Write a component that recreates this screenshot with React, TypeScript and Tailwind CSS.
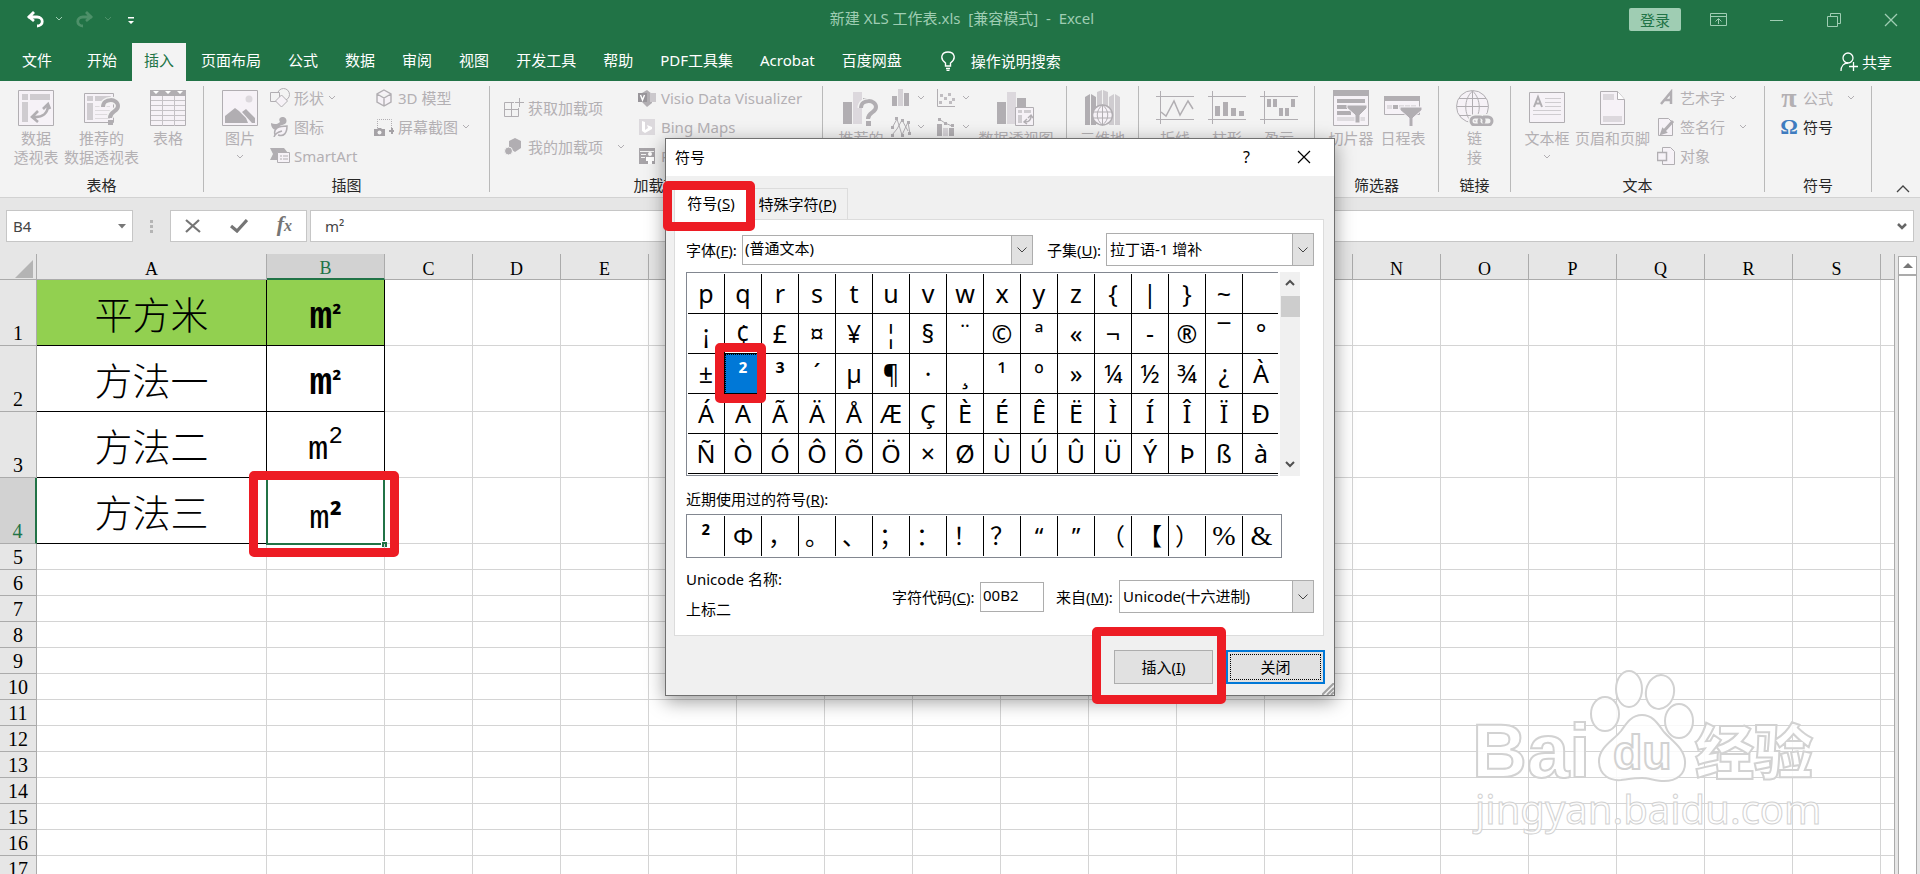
import type { ReactNode } from 'react'
import clsx from 'clsx'

const TABS = ['开始', '插入', '页面布局', '公式', '数据', '审阅', '视图', '开发工具', '帮助', 'PDF工具集', 'Acrobat', '百度网盘']

const COLUMNS = ['C', 'D', 'E', 'F', 'G', 'H', 'I', 'J', 'K', 'L', 'M', 'N', 'O', 'P', 'Q', 'R', 'S']

const SYMBOLS = [
  ...'pqrstuvwxyz{|}~\u00a0',
  ...'¡¢£¤¥¦§¨©ª«¬-®¯°',
  ...'±²³´µ¶·¸¹º»¼½¾¿À',
  ...'ÁÂÃÄÅÆÇÈÉÊËÌÍÎÏÐ',
  ...'ÑÒÓÔÕÖ×ØÙÚÛÜÝÞßà',
]

const RECENT = [...'²Φ，。、；：！？“”（【）%&']

// Shared svg shell: grey "disabled" strokes on a pale fill
function Icon({ w, h = w, children }: { w: number; h?: number; children: ReactNode }) {
  return (
    <svg width={w} height={h} viewBox={`0 0 ${w} ${h}`} fill="none" stroke="#b1aeb2" aria-hidden="true" className="shrink-0">
      {children}
    </svg>
  )
}

function Chevron({ className = 'text-[#b1aeb2]' }: { className?: string }) {
  return (
    <svg width="8" height="6" viewBox="0 0 8 6" fill="none" stroke="currentColor" className={clsx('shrink-0', className)} aria-hidden="true">
      <path d="M1 1l3 3 3-3" />
    </svg>
  )
}

const PivotIcon = () => (
  <Icon w={36}>
    <path d="M.5.5h35v35H.5z" fill="#f6f2f7" />
    <path d="M4 4h6v6H4zM12 4h20v6H12zM4 12h6v20H4z" fill="#cfccd0" stroke="none" />
    <path d="M15 27c10 1 15-4 15-12M20 21l-6 6 6 5M25 19l5-5 2 5" strokeWidth="2.6" />
  </Icon>
)

const QuestionMark = ({ x, y }: { x: number; y: number }) => (
  <g transform={`translate(${x} ${y})`}>
    <path d="M2 8c0-9 15-9 15-1 0 6-8 5-8 12" stroke="#f3f3f3" strokeWidth="7" />
    <path d="M2 8c0-9 15-9 15-1 0 6-8 5-8 12" strokeWidth="4" />
    <path d="M7 21h5v5H7z" fill="#b1aeb2" stroke="none" />
  </g>
)

const RecommendPivotIcon = () => (
  <Icon w={36}>
    <path d="M.5 3.500h29v29H.5z" fill="#f6f2f7" />
    <path d="M3 6h6v5H3zM11 6h16v5H11zM3 13h6v17H3z" fill="#cfccd0" stroke="none" />
    <path d="M11 16.500h15M11 20.500h15M11 24.500h15M11 28.500h15" stroke="#dddadd" />
    <QuestionMark x={17} y={9} />
  </Icon>
)

const TableIcon = () => (
  <Icon w={36}>
    <path d="M.5.5h35v35H.5z" fill="#f6f2f7" />
    <path d="M0 0h36v6H0z" fill="#b1aeb2" stroke="none" />
    <path d="M3 1h6L6 4zM15 1h6l-3 3zM27 1h6l-3 3z" fill="#fff" stroke="none" />
    <path d="M12.500 6v30M24.500 6v30M1 10.500h34M1 15.500h34M1 20.500h34M1 25.500h34M1 30.500h34" stroke="#c5c2c6" />
  </Icon>
)

const PictureIcon = () => (
  <Icon w={36}>
    <path d="M.5.5h35v35H.5z" fill="#f6f2f7" />
    <circle cx="27" cy="9" r="3.500" fill="#dcd8dd" stroke="none" />
    <path d="M3 33v-7l10-8 4 3 7 7 2 5zM20 22l4-3 9 9v5h-3z" fill="#b1aeb2" stroke="none" />
  </Icon>
)

const ShapesIcon = () => (
  <Icon w={20}>
    <circle cx="13.500" cy="6.500" r="6" />
    <path d="M.5 4.500h9v9h-9z" fill="#f3f3f3" />
    <path d="M11.500 7l6 6-6 6-6-6z" fill="#f6f2f7" />
  </Icon>
)

const DuckIcon = () => (
  <Icon w={20}>
    <path d="M10 1c4-3 8 1 6 5-3 3-7 1-8 6-4 2-7-1-7-6 4 2 7 1 9-1-1-2-1-3 0-4z" fill="#b1aeb2" stroke="none" />
    <path d="M5 18c-2-7 4-9 12-9 0 7-3 11-9 9M4 20c1-3 4-5 8-6" fill="#f6f2f7" strokeWidth="1.500" />
  </Icon>
)

const SmartArtIcon = () => (
  <Icon w={20}>
    <path d="M0 2h14l4 5H7v7H0l3-6z" fill="#b1aeb2" stroke="none" />
    <path d="M7.500 6.500h12v10h-12z" fill="#f6f2f7" />
    <path d="M10 10h2M13 10h5M10 13h2M13 13h5" />
  </Icon>
)

const CubeIcon = () => (
  <Icon w={18}>
    <path d="M9 1l7 4v8l-7 4-7-4V5zM2 5l7 4 7-4M9 9v8" fill="#f6f2f7" strokeWidth="1.400" />
  </Icon>
)

const ScreenshotIcon = () => (
  <Icon w={20}>
    <path d="M3.500 11V2.500h14V12" strokeDasharray="1 1" />
    <path d="M0 12h3l1-1h3l1 1h3v7H0zM15 13h2v-2h2v2h1v2h-1v2h-2v-2h-2z" fill="#a5a2a6" stroke="none" />
    <circle cx="5.500" cy="15.500" r="2" fill="#f3f3f3" stroke="none" />
  </Icon>
)

const StoreIcon = () => (
  <Icon w={20}>
    <path d="M.5 4.500H10M.5 4.500v14h14V10M7.500 4.500v14M.5 11.500h14M15.500 0v9M11 4.500h9" />
  </Icon>
)

const AddinsIcon = () => (
  <Icon w={20}>
    <path d="M11 1l6 3v7l-6 4-6-4V4z" fill="#b1aeb2" stroke="none" />
    <circle cx="4.500" cy="14" r="4" fill="#b1aeb2" stroke="#f3f3f3" />
  </Icon>
)

const VisioIcon = () => (
  <Icon w={18}>
    <path d="M9 1l5 4v9l-5 4-5-5V4z" fill="#b1aeb2" stroke="none" />
    <path d="M12 4h6v9h-6z" fill="#cbc8cc" stroke="none" />
    <path d="M0 4h9v9H0z" fill="#98959a" stroke="none" />
    <path d="M2.500 6l2 5 2-5" stroke="#fff" strokeWidth="1.400" />
  </Icon>
)

const BingIcon = () => (
  <Icon w={18}>
    <path d="M1 1h16v16H1z" fill="#dcd9dd" stroke="none" />
    <path d="M4 3l3 1v8l3-2-1-3 5 2v2l-7 4-3-2z" fill="#fff" stroke="none" />
  </Icon>
)

const PeopleIcon = () => (
  <Icon w={18}>
    <path d="M1 1h16v16H1z" fill="#a7a4a8" stroke="none" />
    <path d="M2 4.500h14M3 7.500h5M3 10.500h4" stroke="#f3f3f3" />
    <path d="M12 5a2 2 0 110 4 2 2 0 010-4zM8 10h8v4h-2v3h-4v-3H8z" fill="#fff" stroke="none" />
  </Icon>
)

const RecommendChartIcon = () => (
  <Icon w={36}>
    <path d="M0 12h9v22H0zM20 8h9v4h-9z" fill="#b1aeb2" stroke="none" />
    <path d="M10 2h9v32h-9z" fill="#dcd8dd" stroke="none" />
    <QuestionMark x={16} y={10} />
  </Icon>
)

const BarChartIcon = () => (
  <Icon w={18}>
    <path d="M0 7h5v10H0zM12 4h5v13h-5z" fill="#b1aeb2" stroke="none" />
    <path d="M6 0h5v17H6z" fill="#d5d2d6" stroke="none" />
  </Icon>
)

const ScatterIcon = () => (
  <Icon w={18}>
    <path d="M.5 0v17.500H18" />
    <path d="M3 5h3v3H3zM11 4h3v3h-3zM7 8h3v3H7zM2 12h3v3H2zM12 12h3v3h-3zM15 9h3v3h-3z" fill="#c0bdc1" stroke="none" />
  </Icon>
)

const WaveIcon = () => (
  <Icon w={20}>
    <path d="M1 11l5-9 5 16 6-13 2 12M1 18l5-6 5-9 6 11" />
    <path d="M0 9h3v3H0zM4 0h3v3H4zM10 17h3v3h-3zM16 4h3v3h-3zM0 17h3v3H0zM17 15h3v3h-3zM10 2h3v3h-3z" fill="#b1aeb2" stroke="none" />
  </Icon>
)

const ComboIcon = () => (
  <Icon w={18}>
    <path d="M0 6h5v12H0zM12 10h5v8h-5z" fill="#b1aeb2" stroke="none" />
    <path d="M6 10h5v8H6z" fill="#d5d2d6" stroke="none" />
    <path d="M2 1l6 4 7 3" />
    <path d="M1 0h3v3H1zM7 4h3v3H7zM14 6h3v3h-3z" fill="#b1aeb2" stroke="none" />
  </Icon>
)

const PivotChartIcon = () => (
  <Icon w={38} h={36}>
    <path d="M0 12h9v22H0zM20 8h9v9h-9z" fill="#b1aeb2" stroke="none" />
    <path d="M10 2h9v32h-9z" fill="#dcd8dd" stroke="none" />
    <path d="M18.500 17.500h18v18h-18z" fill="#f6f2f7" />
    <path d="M21 20h4v3h-4zM27 20h7v3h-7zM21 25h4v8h-4z" fill="#cfccd0" stroke="none" />
    <path d="M28 32c4 0 6-2 6-6M30 29l-3 3 3 2M31 28l3-3 2 3" strokeWidth="1.400" />
  </Icon>
)

const MapIcon = () => (
  <Icon w={36}>
    <path d="M0 7l5-3v31H0zM6 4l5 3v28H6z" fill="#b1aeb2" stroke="none" />
    <path d="M12 2l5-2v34h-5zM18 0l5 2v32h-5zM24 7l5-3v31h-5zM30 4l5 3v28h-5z" fill="#cfccd0" stroke="none" />
    <circle cx="17.500" cy="25" r="10" fill="#f6f2f7" strokeWidth="1.500" />
    <path d="M8 22h19M8 28h19M17.500 15v20M17.500 15c-7 5-7 15 0 20M17.500 15c7 5 7 15 0 20" />
  </Icon>
)

const SparkFrame = ({ children }: { children: ReactNode }) => (
  <Icon w={38} h={36}>
    <path d="M0 6.500h38M0 29.500h38M4.500 1v33" />
    {children}
  </Icon>
)

const SlicerIcon = () => (
  <Icon w={36}>
    <path d="M.5.5h35v35H.5z" fill="#f6f2f7" />
    <path d="M0 0h36v6H0zM4 9h28v4H4zM4 15h12v4H4zM4 21h14v4H4z" fill="#b1aeb2" stroke="none" />
    <path d="M4 27h28v4H4z" fill="#dedbdf" stroke="none" />
    <path d="M14 15h20v3l-7 7v8h-5v-8l-8-7z" fill="#b1aeb2" stroke="#f6f2f7" />
  </Icon>
)

const TimelineIcon = () => (
  <Icon w={38} h={36}>
    <path d="M.5 6.500h35v18H.5z" fill="#f6f2f7" />
    <path d="M0 6h36v5H0zM9 15h5v4H9z" fill="#b1aeb2" stroke="none" />
    <path d="M3 15h5v4H3zM15 15h5v4h-5zM21 15h5v4h-5zM27 15h5v4h-5z" fill="#dedbdf" stroke="none" />
    <path d="M16 17h22v3l-9 8v10h-4V28l-9-8z" fill="#b1aeb2" stroke="#f6f2f7" />
  </Icon>
)

const LinkIcon = () => (
  <Icon w={38} h={36}>
    <circle cx="16.500" cy="16.500" r="16" fill="#f6f2f7" />
    <path d="M3 8.500h27M1 16.500h31M3 25.500h27M16.500 1v32M16.500 1c-9 8-9 24 0 32M16.500 1c9 8 9 24 0 32" />
    <path d="M24 35h-5a4 4 0 010-8h5c4 0 5 4 3 6M27 27h5a4 4 0 010 8h-5c-4 0-5-4-3-6" stroke="#f3f3f3" strokeWidth="6" />
    <path d="M24 35h-5a4 4 0 010-8h5c4 0 5 4 3 6M27 27h5a4 4 0 010 8h-5c-4 0-5-4-3-6" strokeWidth="3" />
  </Icon>
)

const TextBoxIcon = () => (
  <Icon w={36}>
    <path d="M.5 2.500h35v30H.5z" fill="#f6f2f7" />
    <path d="M5 17l4-10 4 10M6.500 13.500h5" strokeWidth="2" />
    <path d="M16 8.500h16M16 12.500h16M16 16.500h16M4 20.500h28M4 24.500h28" stroke="#cfccd0" />
  </Icon>
)

const HeaderFooterIcon = () => (
  <Icon w={26} h={36}>
    <path d="M.5 1.500h17l7 8v25H.5z" fill="#f6f2f7" />
    <path d="M17.500 1.500v8h7" fill="#fff" />
    <path d="M3 4h11v6H3zM3 26h19v6H3z" fill="#dcd8dd" stroke="none" />
  </Icon>
)

const WordArtIcon = () => (
  <Icon w={18}>
    <path d="M4 15L14 3v12M7 11h7" strokeWidth="2.500" />
  </Icon>
)

const SignatureIcon = () => (
  <Icon w={18}>
    <path d="M1.500.5h10l4 4v13h-14z" fill="#f6f2f7" />
    <path d="M7 13l9-10M5 15l3-1-2-2z" strokeWidth="3" />
  </Icon>
)

const ObjectIcon = () => (
  <Icon w={18}>
    <path d="M5.500.5h8l4 4v13h-12z" fill="#f6f2f7" />
    <path d="M.5 5.500h9v8h-9z" fill="#f6f2f7" strokeWidth="1.500" />
  </Icon>
)

interface GroupProps {
  label: string
  className: string
  children: ReactNode
}

function Group({ label, className, children }: GroupProps) {
  return (
    <section className={clsx('flex h-[106px] shrink-0 flex-col border-r border-[#b9b9b9]', className)}>
      <div className="flex flex-1 items-start">{children}</div>
      <div className="text-center leading-[14px] text-[#262626]">{label}</div>
    </section>
  )
}

interface BigButtonProps {
  icon: ReactNode
  lines: string[]
  className: string
  menu?: boolean
}

function BigButton({ icon, lines, className, menu }: BigButtonProps) {
  return (
    <button disabled className={clsx('flex shrink-0 flex-col items-center pt-1 leading-[19px] whitespace-nowrap', className)}>
      {icon}
      <span className="mt-[3px]">{lines[0]}</span>
      {lines[1] && <span>{lines[1]}</span>}
      {menu && <span className="pt-1.5"><Chevron /></span>}
    </button>
  )
}

interface SmallButtonProps {
  icon: ReactNode
  text?: string
  menu?: boolean
  active?: boolean
  className?: string
}

function SmallButton({ icon, text, menu, active, className = 'gap-1' }: SmallButtonProps) {
  return (
    <button disabled={!active} className={clsx('flex h-[29px] items-center whitespace-nowrap', active && 'text-[#262626]', className)}>
      <span className="flex w-5 justify-center">{icon}</span>
      {text && <span>{text}</span>}
      {menu && <Chevron />}
    </button>
  )
}

function TitleBar() {
  return (
    <header className="flex h-[43px] items-start bg-[#217346] text-[#9fcdb3]">
      <div className="flex flex-1 items-center gap-2.5 pt-[10px] pl-[26px]">
        <button aria-label="撤消">
          <svg width="19" height="18" viewBox="0 0 19 18" fill="none" stroke="#fff" strokeWidth="2.800">
            <path d="M8 2L3 7l5 4M2 7h9c7 0 7 9 0 9" />
          </svg>
        </button>
        <Chevron className="text-[#9fcdb3]" />
        <button aria-label="恢复" disabled className="ml-0.5">
          <svg width="19" height="18" viewBox="0 0 19 18" fill="none" stroke="#4d9069" strokeWidth="2.800">
            <path d="M11 2l5 5-5 4M17 7H8c-7 0-7 9 0 9" />
          </svg>
        </button>
        <Chevron className="text-[#4d9069]" />
        <button aria-label="自定义快速访问工具栏" className="ml-1.5">
          <svg width="6" height="8" viewBox="0 0 6 8" fill="#fff" className="mt-1">
            <path d="M0 0h6v1.500H0zM0 4h6L3 7z" />
          </svg>
        </button>
      </div>
      <h1 className="pt-[7px] leading-[22px] whitespace-pre">新建 XLS 工作表.xls  [兼容模式]  -  Excel</h1>
      <div className="flex flex-1 items-center justify-end pt-2 pr-[22px]">
        <button className="mr-[29px] h-[23px] w-[52px] rounded-xs bg-[#9fcdb3] leading-[22px] text-[#217346]">登录</button>
        <button aria-label="功能区显示选项" className="mr-[42px]">
          <svg width="18" height="14" viewBox="0 0 18 14" fill="none" stroke="currentColor">
            <path d="M.5.5h16v12H.5zM.5 3.500h16M8.500 11V6M5.500 8.500l3-3 3 3" />
          </svg>
        </button>
        <button aria-label="最小化" className="mr-[43px]">
          <svg width="14" height="14" viewBox="0 0 14 14" stroke="currentColor"><path d="M0 7.500h13" /></svg>
        </button>
        <button aria-label="向下还原" className="mr-[43px]">
          <svg width="14" height="14" viewBox="0 0 14 14" fill="none" stroke="currentColor">
            <path d="M.5 3.500h10v10H.5zM3.500 3V.5h10v10H11" />
          </svg>
        </button>
        <button aria-label="关闭窗口">
          <svg width="14" height="14" viewBox="0 0 14 14" stroke="currentColor" strokeWidth="1.300"><path d="M1 1l12 12M13 1L1 13" /></svg>
        </button>
      </div>
    </header>
  )
}

function TabBar() {
  return (
    <nav className="flex h-[38px] items-stretch gap-[3px] bg-[#217346] pl-2.5 whitespace-nowrap text-white">
      <button className="mr-2 px-3 pb-1">文件</button>
      {TABS.map((tab) => (
        <button key={tab} className={clsx('px-3 pb-1', tab === '插入' && 'bg-[#f3f3f3] text-[#217346]')}>
          {tab}
        </button>
      ))}
      <button className="ml-6 flex items-center gap-4 pb-0.5">
        <svg width="14" height="20" viewBox="0 0 14 20" fill="none" stroke="currentColor" strokeWidth="1.400">
          <path d="M4.500 15v-3C-2 7 1 1 7 1s9 6 2.500 11v3zM5 17.500h4M5.500 19.500h3" />
        </svg>
        操作说明搜索
      </button>
      <button className="mr-7 ml-auto flex items-center gap-1">
        <svg width="18" height="20" viewBox="0 0 18 20" fill="none" stroke="currentColor" strokeWidth="1.300">
          <circle cx="8" cy="6" r="5" />
          <path d="M1 19c0-5 3-8 7-8M9 14.500h9M13.500 10v9" />
        </svg>
        共享
      </button>
    </nav>
  )
}

function Ribbon() {
  return (
    <div className="flex h-[117px] border-b border-[#d2d2d2] bg-[#f3f3f3] pt-[5px] text-[#b3b0b3]">
      <Group label="表格" className="w-[204px]">
        <BigButton className="ml-2 w-14" icon={<PivotIcon />} lines={['数据', '透视表']} />
        <BigButton className="w-[75px]" icon={<RecommendPivotIcon />} lines={['推荐的', '数据透视表']} />
        <BigButton className="w-[58px]" icon={<TableIcon />} lines={['表格']} />
      </Group>
      <Group label="插图" className="w-[286px]">
        <BigButton className="ml-2 w-14" icon={<PictureIcon />} lines={['图片']} menu />
        <div className="-mt-[3px] ml-0.5 w-[104px]">
          <SmallButton icon={<ShapesIcon />} text="形状" menu className="gap-1" />
          <SmallButton icon={<DuckIcon />} text="图标" />
          <SmallButton icon={<SmartArtIcon />} text="SmartArt" />
        </div>
        <div className="-mt-[3px]">
          <SmallButton icon={<CubeIcon />} text="3D 模型" />
          <SmallButton icon={<ScreenshotIcon />} text="屏幕截图" menu />
        </div>
      </Group>
      <Group label="加载项" className="w-[333px]">
        <div className="mt-[7px] ml-[14px] flex w-[133px] flex-col gap-2.5">
          <SmallButton icon={<StoreIcon />} text="获取加载项" />
          <SmallButton icon={<AddinsIcon />} text="我的加载项" menu className="gap-1 [&>svg]:ml-2.5" />
        </div>
        <div className="-mt-[3px]">
          <SmallButton icon={<VisioIcon />} text="Visio Data Visualizer" />
          <SmallButton icon={<BingIcon />} text="Bing Maps" />
          <SmallButton icon={<PeopleIcon />} text="People Graph" />
        </div>
      </Group>
      <Group label="图表" className="w-[244px]">
        <BigButton className="ml-2 w-[60px]" icon={<RecommendChartIcon />} lines={['推荐的', '图表']} />
        <div className="-mt-[3px] w-[45px]">
          <SmallButton icon={<BarChartIcon />} menu className="gap-1.5" />
          <SmallButton icon={<WaveIcon />} menu className="gap-1.5" />
        </div>
        <div className="-mt-[3px] w-10">
          <SmallButton icon={<ScatterIcon />} menu className="gap-1.5" />
          <SmallButton icon={<ComboIcon />} menu className="gap-1.5" />
        </div>
        <BigButton className="w-[80px]" icon={<PivotChartIcon />} lines={['数据透视图']} />
      </Group>
      <Group label="演示" className="w-[72px]">
        <BigButton className="w-full" icon={<MapIcon />} lines={['三维地', '图']} />
      </Group>
      <Group label="迷你图" className="w-44">
        <BigButton
          className="ml-2.5 w-[52px]"
          icon={<SparkFrame><path d="M5 22l5 4 8-15 6 14 8-14 5 8" strokeWidth="1.500" /></SparkFrame>}
          lines={['折线']}
        />
        <BigButton
          className="w-[52px]"
          icon={<SparkFrame><path d="M7 16h5v10H7zM15 12h5v14h-5zM23 18h5v8h-5zM31 21h5v5h-5z" fill="#b1aeb2" stroke="none" /></SparkFrame>}
          lines={['柱形']}
        />
        <BigButton
          className="w-[52px]"
          icon={<SparkFrame><path d="M7 9h4v8H7zM13 9h4v8h-4zM19 18h4v8h-4zM25 18h4v8h-4zM31 9h4v8h-4z" fill="#b1aeb2" stroke="none" /></SparkFrame>}
          lines={['盈亏']}
        />
      </Group>
      <Group label="筛选器" className="w-[124px]">
        <BigButton className="ml-2 w-14" icon={<SlicerIcon />} lines={['切片器']} />
        <BigButton className="w-12" icon={<TimelineIcon />} lines={['日程表']} />
      </Group>
      <Group label="链接" className="w-[72px]">
        <BigButton className="w-full" icon={<LinkIcon />} lines={['链', '接']} />
      </Group>
      <Group label="文本" className="w-[254px]">
        <BigButton className="ml-2 w-14" icon={<TextBoxIcon />} lines={['文本框']} menu />
        <BigButton className="w-[75px]" icon={<HeaderFooterIcon />} lines={['页眉和页脚']} />
        <div className="-mt-[3px] ml-1.5">
          <SmallButton icon={<WordArtIcon />} text="艺术字" menu className="gap-1" />
          <SmallButton icon={<SignatureIcon />} text="签名行" menu className="gap-1 [&>svg]:ml-2.5" />
          <SmallButton icon={<ObjectIcon />} text="对象" className="gap-1" />
        </div>
      </Group>
      <Group label="符号" className="w-[107px]">
        <div className="-mt-[3px] ml-3.5">
          <SmallButton icon={<span className="font-['Liberation_Serif',serif] text-[28px] leading-5 font-bold">π</span>} text="公式" menu className="gap-1 [&>svg]:ml-2.5" />
          <SmallButton active icon={<span className="font-['Liberation_Serif',serif] text-[22px] leading-5 font-bold text-[#3f7cbf]">Ω</span>} text="符号" />
        </div>
      </Group>
      <button aria-label="折叠功能区" className="mr-2.5 ml-auto self-end pb-1 text-[#444]">
        <svg width="14" height="8" viewBox="0 0 14 8" fill="none" stroke="currentColor" strokeWidth="1.300"><path d="M1 7l6-6 6 6" /></svg>
      </button>
    </div>
  )
}

function FormulaBar() {
  return (
    <div className="flex h-14 items-start bg-[#e6e6e6] px-1.5 pt-3 text-[#444]">
      <div className="flex h-8 w-[127px] items-center border border-[#c6c6c6] bg-white pr-1.5">
        <input aria-label="名称框" defaultValue="B4" className="h-full min-w-0 flex-1 pl-1.5 outline-none" />
        <svg width="8" height="5" viewBox="0 0 8 5" fill="#777"><path d="M0 0h8L4 4.500z" /></svg>
      </div>
      <div className="flex h-8 w-[37px] flex-col items-center justify-center gap-0.5">
        <i className="size-[3px] bg-[#b5b5b5]" />
        <i className="size-[3px] bg-[#b5b5b5]" />
        <i className="size-[3px] bg-[#b5b5b5]" />
      </div>
      <div className="flex h-8 w-[137px] items-center justify-between border border-[#c6c6c6] bg-white px-3.5 text-[#757575]">
        <button aria-label="取消">
          <svg width="16" height="14" viewBox="0 0 16 14" fill="none" stroke="currentColor" strokeWidth="2.200"><path d="M1 1l14 12M14 1L1 13" /></svg>
        </button>
        <button aria-label="输入">
          <svg width="18" height="14" viewBox="0 0 18 14" fill="none" stroke="currentColor" strokeWidth="3.200"><path d="M1 7l6 5L17 1" /></svg>
        </button>
        <button aria-label="插入函数" className="font-['Liberation_Serif',serif] text-[22px] leading-5 font-bold italic">
          f<span className="text-base">x</span>
        </button>
      </div>
      <div className="ml-[3px] flex h-8 flex-1 items-center border border-[#c6c6c6] bg-white pr-1.5">
        <input aria-label="编辑栏" defaultValue="m²" className="h-full min-w-0 flex-1 pl-3.5 outline-none" />
        <svg width="10" height="7" viewBox="0 0 10 7" fill="none" stroke="#666" strokeWidth="2.500"><path d="M1 1l4 4 4-4" /></svg>
      </div>
    </div>
  )
}

const SmallSquare = () => <b className="relative bottom-1 font-['Noto_Sans',sans-serif] text-2xl">²</b>

const DATA: { name: string; value: ReactNode }[] = [
  { name: '平方米', value: <><b className="text-[38px]">m</b><SmallSquare /></> },
  { name: '方法一', value: <><b className="text-[38px]">m</b><SmallSquare /></> },
  { name: '方法二', value: <><span className="text-[34px]">m</span><span className="relative bottom-4 text-2xl">2</span></> },
  { name: '方法三', value: <><span className="text-[34px]">m</span><b className="font-['Noto_Sans',sans-serif] text-[32px]">²</b></> },
]

function Sheet() {
  const rows = Array.from({ length: 17 }, (_, i) => i + 1)
  return (
    <div className="flex flex-1 overflow-hidden bg-[#e6e6e6]">
      <div className="min-w-0 flex-1 border-r border-[#ababab]">
        <table className="w-full table-fixed border-separate border-spacing-0 bg-white">
          <colgroup>
            <col className="w-[37px]" />
            <col className="w-[230px]" />
            <col className="w-[118px]" />
            {COLUMNS.map((c) => <col key={c} className="w-[88px]" />)}
            <col />
          </colgroup>
          <thead className="font-['Liberation_Serif',serif] text-lg leading-5">
            <tr className="h-[26px] bg-[#e6e6e6]">
              <th aria-label="全选" className="border-r border-b border-[#ababab] p-0">
                <svg width="18" height="18" viewBox="0 0 18 18" fill="#b4b4b4" className="mt-1 ml-[15px]"><path d="M18 0v18H0z" /></svg>
              </th>
              <th className="border-r border-b border-[#ababab] p-0 pt-1 font-normal">A</th>
              <th className="border-r border-b-2 border-r-[#ababab] border-b-[#217346] bg-[#d2d2d2] p-0 pt-1 font-normal text-[#217346]">B</th>
              {COLUMNS.map((c) => <th key={c} className="border-r border-b border-[#ababab] p-0 pt-1 font-normal">{c}</th>)}
              <th className="border-b border-[#ababab] p-0" />
            </tr>
          </thead>
          <tbody>
            {rows.map((n) => {
              const item = DATA[n - 1]
              return (
                <tr key={n} className={item ? 'h-[66px]' : 'h-[26px]'}>
                  <th
                    className={clsx(
                      "border-b border-b-[#ababab] p-0 align-bottom font-['Liberation_Serif',serif] text-xl leading-6 font-normal",
                      n === 4 ? 'border-r-2 border-r-[#217346] bg-[#d2d2d2] text-[#217346]' : 'border-r border-r-[#ababab] bg-[#e6e6e6]',
                    )}
                  >
                    {n}
                  </th>
                  <td
                    className={clsx(
                      "border-r border-b p-0 text-center font-['Noto_Sans_CJK_SC',sans-serif] text-[38px] leading-[50px] font-light",
                      item ? 'border-black' : 'border-[#d4d4d4]',
                      n === 1 && 'bg-[#92d050]',
                    )}
                  >
                    {item?.name}
                  </td>
                  <td
                    className={clsx(
                      "relative border-r border-b p-0 text-center font-['Liberation_Mono',monospace]",
                      item ? 'border-black' : 'border-[#d4d4d4]',
                      n === 1 && 'bg-[#92d050]',
                    )}
                  >
                    {item && <div className="h-16 pt-3 leading-[50px]">{item.value}</div>}
                    {n === 4 && (
                      <div className="absolute -inset-x-px -top-px -bottom-0.5 border-2 border-[#217346]">
                        <i className="absolute -right-1 -bottom-1 size-[6px] border-t border-l border-white bg-[#217346]" />
                      </div>
                    )}
                  </td>
                  {COLUMNS.map((c) => <td key={c} className="border-r border-b border-[#d4d4d4] p-0" />)}
                  <td className="border-b border-[#d4d4d4] p-0" />
                </tr>
              )
            })}
          </tbody>
        </table>
      </div>
      <div className="mt-0.5 mr-[3px] ml-[3px] flex w-[19px] flex-col">
        <button aria-label="向上滚动" className="flex h-[19px] items-center justify-center border border-[#ababab] bg-white">
          <svg width="10" height="5" viewBox="0 0 10 5" fill="#777"><path d="M0 5h10L5 0z" /></svg>
        </button>
        <div className="flex-1 border-x border-t border-[#ababab] bg-white" />
      </div>
    </div>
  )
}

const DropArrow = ({ className }: { className: string }) => (
  <span className={clsx('pointer-events-none flex items-center justify-center border border-[#adadad] bg-[#e1e1e1]', className)}>
    <svg width="10" height="6" viewBox="0 0 10 6" fill="none" stroke="#444"><path d="M.5.5L5 5 9.500.5" /></svg>
  </span>
)

function DropDown({ id, option, className }: { id: string; option: string; className: string }) {
  return (
    <div className={clsx('relative h-[33px] shrink-0', className)}>
      <select id={id} className="size-full appearance-none border border-[#adadad] bg-white pb-0.5 pl-[3px] outline-none">
        <option>{option}</option>
      </select>
      <DropArrow className="absolute inset-y-0 right-0 w-[22px]" />
    </div>
  )
}

function SymbolDialog() {
  return (
    <div
      role="dialog"
      aria-label="符号"
      className="absolute top-[138px] left-[665px] w-[670px] border border-[#707070] bg-[#f0f0f0] text-black shadow-[0_5px_18px_rgba(0,0,0,0.4)]"
    >
      <div className="flex h-[37px] items-center bg-white pb-0.5 pl-[9px]">
        <h2 className="flex-1">符号</h2>
        <button aria-label="帮助" className="mr-[47px] text-base">?</button>
        <button aria-label="关闭对话框" className="mr-[23px]">
          <svg width="14" height="14" viewBox="0 0 14 14" stroke="currentColor" strokeWidth="1.200"><path d="M1 1l12 12M13 1L1 13" /></svg>
        </button>
      </div>

      <div className="px-[8px] pt-[10px]">
        <div role="tablist" className="flex items-end">
          <button role="tab" aria-selected="true" className="relative z-10 -mb-px h-[34px] w-[74px] border border-b-0 border-[#dcdcdc] bg-white pb-0.5">
            符号(<u>S</u>)
          </button>
          <button role="tab" aria-selected="false" className="h-[31px] w-[100px] border border-b-0 border-l-0 border-[#dcdcdc]">
            特殊字符(<u>P</u>)
          </button>
        </div>

        <div className="mr-0.5 h-[417px] border border-[#dcdcdc] bg-white pl-[11px]">
          <div className="mt-[13px] flex h-[33px] items-center">
            <label htmlFor="font" className="w-14">字体(<u>F</u>):</label>
            <div className="flex h-[30px] w-[291px] border border-[#adadad]">
              <input id="font" defaultValue="(普通文本)" className="min-w-0 flex-1 pb-1 pl-0.5 outline-none" />
              <DropArrow className="-my-px -mr-px w-[22px]" />
            </div>
            <label htmlFor="subset" className="ml-3.5 w-[59px]">子集(<u>U</u>):</label>
            <DropDown id="subset" option="拉丁语-1 增补" className="w-[208px]" />
          </div>

          <div className="mt-[6px] flex h-[204px] gap-0.5">
            <div className="w-[592px] overflow-hidden border-y border-l border-[#828790] p-px">
              <div className="grid w-[592px] grid-cols-[repeat(16,37px)] font-['Noto_Sans',sans-serif] text-[25px]">
                {SYMBOLS.map((s, i) => (
                  <button
                    key={i}
                    className={clsx(
                      'h-10 border-r border-b border-black leading-[39px]',
                      (s === '²' || s === '³') && 'font-semibold',
                      s === '²' && 'bg-[#0078d7] text-white outline-1 -outline-offset-1 outline-black outline-dotted',
                    )}
                  >
                    {s}
                  </button>
                ))}
              </div>
            </div>
            <div className="flex w-5 flex-col items-center bg-[#f0f0f0] pt-[7px] pb-2 text-[#505050]">
              <svg width="10" height="7" viewBox="0 0 10 7" fill="none" stroke="currentColor" strokeWidth="2"><path d="M1 6l4-4 4 4" /></svg>
              <div className="mt-[10px] h-[21px] w-[19px] bg-[#cdcdcd]" />
              <svg width="10" height="7" viewBox="0 0 10 7" fill="none" stroke="currentColor" strokeWidth="2" className="mt-auto"><path d="M1 1l4 4 4-4" /></svg>
            </div>
          </div>

          <p className="mt-3 leading-[22px]">近期使用过的符号(<u>R</u>):</p>
          <div className="mt-1 h-11 w-[596px] overflow-hidden border border-[#828790] p-px">
            <div className="grid w-[594px] grid-cols-[repeat(16,37px)] text-2xl">
              {RECENT.map((s, i) => (
                <button
                  key={i}
                  className={clsx(
                    'h-10 overflow-hidden leading-10',
                    i < 15 && 'border-r border-black',
                    i === 0 && 'font-semibold',
                    i > 13 && "font-['Liberation_Serif',serif] text-[28px]",
                  )}
                >
                  {s}
                </button>
              ))}
            </div>
          </div>

          <div className="mt-2.5 flex items-start">
            <div className="flex w-[206px] flex-col gap-2 leading-[22px]">
              <span>Unicode 名称:</span>
              <span>上标二</span>
            </div>
            <div className="mt-3 flex h-[33px] items-center">
              <label htmlFor="code" className="w-[88px]">字符代码(<u>C</u>):</label>
              <input id="code" defaultValue="00B2" className="h-[30px] w-16 border border-[#adadad] pb-1 pl-0.5 outline-none" />
              <label htmlFor="from" className="ml-3 w-[63px]">来自(<u>M</u>):</label>
              <DropDown id="from" option="Unicode(十六进制)" className="w-[195px]" />
            </div>
          </div>
        </div>
      </div>

      <div className="flex justify-end gap-[13px] pt-[14px] pr-[9px] pb-[11px]">
        <button className="h-[34px] w-[99px] border border-[#adadad] bg-[#e1e1e1]">插入(<u>I</u>)</button>
        <button className="h-[34px] w-[99px] border-2 border-[#0078d7] bg-[#e1e1e1] outline-1 -outline-offset-5 outline-black outline-dotted">关闭</button>
      </div>
      <svg width="12" height="12" viewBox="0 0 12 12" stroke="#a0a0a0" strokeWidth="2" className="absolute right-0 bottom-0">
        <path d="M0 12L12 0M5 12l7-7M9 12l3-3" />
      </svg>
    </div>
  )
}

const Mark = ({ className }: { className: string }) => (
  <div className={clsx('pointer-events-none absolute z-20 rounded-[5px] border-9 border-[#ed1c24]', className)} />
)

function Watermark() {
  return (
    <svg
      width="360"
      height="176"
      viewBox="0 0 360 176"
      fill="#fff"
      fillOpacity="0.85"
      stroke="#d2d2d2"
      strokeWidth="2"
      className="pointer-events-none absolute right-[88px] bottom-[30px] font-['Liberation_Sans','Noto_Sans_CJK_SC',sans-serif]"
    >
      <text x="0" y="109" fontSize="76" fontWeight="700">Bai</text>
      <ellipse cx="133" cy="46" rx="14" ry="17" />
      <ellipse cx="157" cy="21" rx="13" ry="18" />
      <ellipse cx="188" cy="24" rx="14" ry="17" transform="rotate(12 188 24)" />
      <ellipse cx="207" cy="53" rx="14" ry="17" />
      <path d="M170 47c-11 0-16 9-21 16-7 9-22 16-22 30 0 15 12 20 22 19 8-1 14-2 21-2s14 3 22 3c12 0 22-6 21-20-1-13-13-20-21-29-6-8-11-17-22-17z" />
      <text x="141" y="101" fontSize="48" fontWeight="700">du</text>
      <text x="223" y="106" fontSize="59" fontWeight="900">经验</text>
      <text x="3" y="156" fontSize="40" strokeWidth="1" className="font-['Noto_Sans',sans-serif]">jingyan.baidu.com</text>
    </svg>
  )
}

export default function App() {
  return (
    <div className="relative flex h-screen flex-col overflow-hidden font-['Noto_Sans','Noto_Sans_CJK_SC',sans-serif] text-[15px] leading-5">
      <TitleBar />
      <TabBar />
      <Ribbon />
      <FormulaBar />
      <Sheet />
      <Watermark />
      <SymbolDialog />
      <Mark className="top-[181px] left-[663px] h-[50px] w-[92px]" />
      <Mark className="top-[343px] left-[715px] h-[60px] w-[51px]" />
      <Mark className="top-[471px] left-[249px] h-[86px] w-[150px]" />
      <Mark className="top-[627px] left-[1092px] h-[77px] w-[134px]" />
    </div>
  )
}
